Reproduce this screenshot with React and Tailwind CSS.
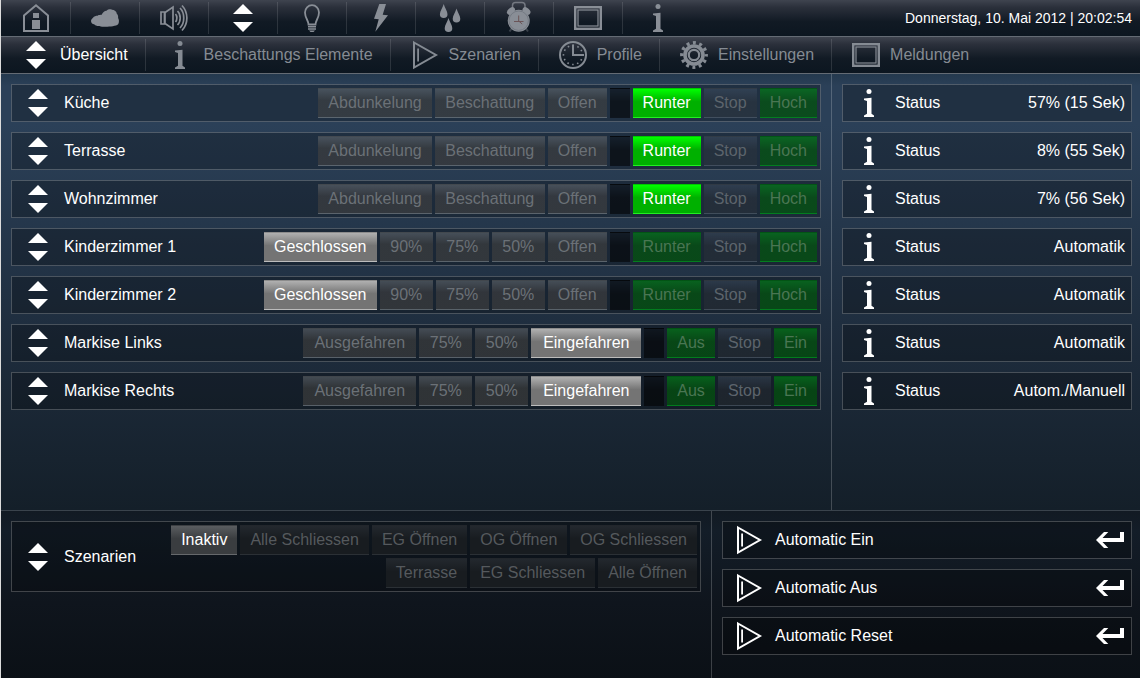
import React from 'react';

const SHAPES = {
  updown: (
    <>
      <path d="M14 0 24 10H4z" />
      <path d="M14 28 24 18H4z" />
    </>
  ),
  house: (
    <>
      <path d="M2 27V11.5L14 1.3l12 10.2V27z" fill="none" stroke="currentColor" strokeWidth="2" />
      <path d="M11 9h6v5h-6zM10 16h8v9h-8z" />
    </>
  ),
  cloud: (
    <path d="M0 17c0-1.500 1-2.500 2-3.300 1-1.500 3-2 4.500-2 1.500-1 3-.7 4.200-.9C11.500 8.500 13.500 6.800 15.500 6.800c1.500-1.500 4-1.800 5.500-1 2.500 0 4.500 1.700 4.800 3.900 1.500 1.300 1.400 3 1.300 4.300 1 1.500 1 3.500.6 5-.5 2-2.500 2.800-4.200 2.700-2 1-5 .6-7 1-3 .3-6 0-8-.8-2 .3-4-.2-5-1.400C1.500 20.200 0 19 0 17z" />
  ),
  speaker: (
    <g fill="none" stroke="currentColor" strokeWidth="1.700">
      <path d="M1 8h3.500v12H1zM5 8.500l8-5.500v22l-8-5.500z" />
      <path d="M15.500 10c1.800 2 1.800 6 0 8M17.500 7c3.600 3.500 3.600 10.500 0 14M20 4c5 5 5 15 0 20M22 1.500c6.500 7 6.500 18 0 25" />
    </g>
  ),
  bulb: (
    <>
      <path
        d="M10.500 20.500c0-4-3.500-6.500-3.500-12A7 7.300 0 0 1 21 8.500c0 5.500-3.500 8-3.500 12z"
        fill="none"
        stroke="currentColor"
        strokeWidth="1.800"
      />
      <path d="M10 22h8v1.500h-8zM10 24.300h8v1.500h-8zM11 26.500h6l-1.500 1.500h-3z" />
    </>
  ),
  bolt: <path d="M12.300 0H19l-3.300 10.700 5.300.6L8.300 27.700l3.400-12.400L7 14.700z" />,
  drops: (
    <>
      <path d="M7.700 0c.8 3.500 3.800 7 3.800 10.200a3.800 3.800 0 0 1-7.600 0C3.900 7 6.900 3.500 7.700 0z" />
      <path d="M20.500 4.500c.8 3.500 3.800 7 3.800 10.200a3.800 3.800 0 0 1-7.600 0c0-3.200 3-6.700 3.800-10.200z" />
      <path d="M12.500 14c.8 3.500 3.800 7 3.800 10.200a3.800 3.800 0 0 1-7.600 0c0-3.200 3-6.700 3.800-10.200z" />
    </>
  ),
  alarm: (
    <>
      <path d="M7.500 5V1.500c0-2 1.500-3 3-3h6.500c1.500 0 3 1 3 3V5" fill="none" stroke="currentColor" strokeWidth="1.500" opacity=".75" />
      <ellipse cx="6" cy="7" rx="4.500" ry="3" transform="rotate(-42 6 7)" />
      <ellipse cx="21.500" cy="7" rx="4.500" ry="3" transform="rotate(42 21.500 7)" />
      <path d="M7 24l-2.500 3.500M20.500 24l2.500 3.500" stroke="currentColor" strokeWidth="2" opacity=".35" />
      <circle cx="13.700" cy="16.700" r="11" />
      <circle cx="13.700" cy="16.700" r="9.700" fill="none" stroke="#747a83" strokeWidth="1" />
      <path d="M13.700 11.500v5.500l3.500 3M9 17.500h9.500" fill="none" stroke="#6b5558" strokeWidth="1" />
    </>
  ),
  screen: (
    <>
      <rect x="1.200" y="3.200" width="25.600" height="21.600" fill="none" stroke="currentColor" strokeWidth="2.400" />
      <rect x="4" y="6" width="20" height="16" fill="none" stroke="currentColor" strokeWidth="1.200" />
    </>
  ),
  info: (
    <>
      <circle cx="14" cy="2.500" r="2.500" />
      <path d="M9 9.500l7.500-.7v16l2.500 1.700V28H9v-1.500l3-1.700V12l-3-1z" />
    </>
  ),
  play: (
    <>
      <path d="M3 1.500 25 14 3 26.500z" fill="none" stroke="currentColor" strokeWidth="2" />
      <path d="M6.200 7.500h1.800v13H6.200z" />
    </>
  ),
  clock: (
    <>
      <circle cx="14" cy="14" r="13" fill="none" stroke="currentColor" strokeWidth="2" />
      <circle cx="14" cy="14" r="9.500" fill="none" stroke="currentColor" strokeWidth="1.600" strokeDasharray="1.600 3.374" strokeDashoffset=".8" />
      <path d="M14 3.500V14h11" fill="none" stroke="currentColor" strokeWidth="2" />
    </>
  ),
  gear: (
    <>
      <circle cx="14" cy="14" r="9" fill="none" stroke="currentColor" strokeWidth="3.600" />
      <circle cx="14" cy="14" r="12.200" fill="none" stroke="currentColor" strokeWidth="3.400" strokeDasharray="3 3.388" strokeDashoffset="1.500" />
      <circle cx="14" cy="14" r="5.200" fill="none" stroke="currentColor" strokeWidth="2.200" />
    </>
  ),
};

function Icon({ name }) {
  return (
    <svg viewBox="0 0 28 28" className="size-7 shrink-0 overflow-visible" fill="currentColor" aria-hidden="true">
      {SHAPES[name]}
    </svg>
  );
}

function EnterIcon() {
  return (
    <svg viewBox="0 0 28 16" className="h-4 w-7 shrink-0" fill="currentColor" aria-hidden="true">
      <path d="M0 8 8 0h4.300L6.500 6H24V0h4v10H6.500l5.800 6H8z" />
    </svg>
  );
}

const TONES = {
  off: 'border-t-[#5a626966] border-b-[#7a848c66] bg-[linear-gradient(#696e738c,#4644428c_40%)] text-[#6b7177]',
  on: 'border-t-[#8c8c8c] border-b-[#bcbcbc] bg-[linear-gradient(#b0b0b0,#747474_45%)] text-white',
  soft: 'border-t-[#3c444c80] border-b-[#6a747c50] bg-[linear-gradient(#505f7359,#3c3c3c40_45%)] text-[#5c646c]',
  gap: 'border-t-black/40 border-b-black/30 bg-[linear-gradient(#00000050,#00000090_45%)]',
  go: 'border-t-[#00c800] border-b-[#22f022] bg-[linear-gradient(#00ff00,#00b000_45%)] text-white',
  green: 'border-t-[#005a14a6] border-b-[#008c1ea6] bg-[linear-gradient(#008214a6,#005a0aa6_45%)] text-[#4a7653]',
  scene: 'border-t-[#22262b] border-b-[#2b3035] bg-[linear-gradient(#23282e,#181c20_45%)] text-[#55595d]',
  sceneOn: 'border-t-[#3c3f42] border-b-[#66696c] bg-[linear-gradient(#5a5d60,#3a3d40_45%)] text-white',
};

const WIDE = ['Abdunkelung', 'Geschlossen', 'Ausgefahren'];
const MEDIUM = ['Beschattung', 'Eingefahren'];

function keyWidth(label) {
  if (WIDE.includes(label)) return 'min-w-[113px]';
  if (MEDIUM.includes(label)) return 'min-w-[110px]';
  if (label.endsWith('%') || label === 'Stop') return 'min-w-[53px]';
  return '';
}

function Key({ label, tone }) {
  if (!label) return <span className={`h-[30px] w-5 border-y ${TONES.gap}`} />;
  return (
    <button
      type="button"
      aria-pressed={tone === 'on' || tone === 'go' || tone === 'sceneOn'}
      className={`h-[30px] border-y px-2.5 leading-[26px] whitespace-nowrap ${keyWidth(label)} ${TONES[tone]}`}
    >
      {label}
    </button>
  );
}

const BOX = 'flex border border-white/22 bg-black/25';

const shade = [['Abdunkelung', 'off'], ['Beschattung', 'off'], ['Offen', 'off'], [''], ['Runter', 'go'], ['Stop', 'soft'], ['Hoch', 'green']];
const kids = [
  ['Geschlossen', 'on'], ['90%', 'off'], ['75%', 'off'], ['50%', 'off'], ['Offen', 'off'],
  [''], ['Runter', 'green'], ['Stop', 'soft'], ['Hoch', 'green'],
];
const awning = [
  ['Ausgefahren', 'off'], ['75%', 'off'], ['50%', 'off'], ['Eingefahren', 'on'],
  [''], ['Aus', 'green'], ['Stop', 'soft'], ['Ein', 'green'],
];

const rows = [
  { name: 'Küche', keys: shade, status: '57% (15 Sek)' },
  { name: 'Terrasse', keys: shade, status: '8% (55 Sek)' },
  { name: 'Wohnzimmer', keys: shade, status: '7% (56 Sek)' },
  { name: 'Kinderzimmer 1', keys: kids, status: 'Automatik' },
  { name: 'Kinderzimmer 2', keys: kids, status: 'Automatik' },
  { name: 'Markise Links', keys: awning, status: 'Automatik' },
  { name: 'Markise Rechts', keys: awning, status: 'Autom./Manuell' },
];

const scenes = ['Inaktiv', 'Alle Schliessen', 'EG Öffnen', 'OG Öffnen', 'OG Schliessen', 'Terrasse', 'EG Schliessen', 'Alle Öffnen'];
const actions = ['Automatic Ein', 'Automatic Aus', 'Automatic Reset'];

const sections = [
  ['house', 'Haus'], ['cloud', 'Wetter'], ['speaker', 'Audio'], ['updown', 'Beschattung'], ['bulb', 'Licht'],
  ['bolt', 'Strom'], ['drops', 'Wasser'], ['alarm', 'Wecker'], ['screen', 'Bildschirm'], ['info', 'Info'],
];
const tabs = [
  ['updown', 'Übersicht'], ['info', 'Beschattungs Elemente'], ['play', 'Szenarien'],
  ['clock', 'Profile'], ['gear', 'Einstellungen'], ['screen', 'Meldungen'],
];

const BAR = 'flex h-[37px] items-center border-b border-[#646b74] bg-[linear-gradient(#3f444f,#2b303b_20%,#111a24_60%,#0c1620)] pl-px';
const SEP = 'border-r border-white/12 last:border-r-0';
const NARROW = "font-['Liberation_Sans_Narrow','Arial_Narrow','Liberation_Sans',sans-serif]";

export default function App() {
  return (
    <div className="flex min-h-screen flex-col border-l border-[#dcdcdc] bg-[#0c1118] font-['Liberation_Sans',Arial,sans-serif] text-base text-white">
      <header className={NARROW}>
        <div className={`${BAR} justify-between pr-2`}>
          <nav aria-label="Bereiche" className="flex">
            {sections.map(([icon, label]) => (
              <a
                key={icon}
                href={`#${icon}`}
                aria-label={label}
                className={`flex h-8 w-[69px] items-center justify-center ${SEP} ${icon === 'updown' ? 'text-white' : 'text-[#898e96]'}`}
              >
                <Icon name={icon} />
              </a>
            ))}
          </nav>
          <time dateTime="2012-05-10T20:02:54" className="text-sm whitespace-nowrap">
            Donnerstag, 10. Mai 2012 | 20:02:54
          </time>
        </div>
        <nav aria-label="Beschattung" className={BAR}>
          {tabs.map(([icon, label], i) => (
            <a
              key={label}
              href={`#tab-${icon}`}
              aria-current={i === 0 ? 'page' : undefined}
              className={`flex h-8 items-center gap-2.5 pr-[17px] pl-5 whitespace-nowrap ${SEP} ${i === 0 ? 'text-white' : 'text-[#858b93]'}`}
            >
              <Icon name={icon} />
              {label}
            </a>
          ))}
        </nav>
      </header>

      <main className="grid flex-1 grid-cols-[831fr_308fr] border-b border-[#3a434c] bg-[linear-gradient(#24394e,#2b4058_12px,#2b4058_50px,#1d2b3b_65%,#141f29)]">
        <section className="flex flex-col gap-2.5 border-r border-white/20 p-2.5">
          {rows.map((row) => (
            <div key={row.name} role="group" aria-label={row.name} className={`${BOX} items-center p-[3px]`}>
              <div className="flex h-[30px] flex-1 items-center gap-3 pl-[9px]">
                <Icon name="updown" />
                <span>{row.name}</span>
              </div>
              <div className="flex gap-[3px]">
                {row.keys.map(([label, tone], i) => (
                  <Key key={i} label={label} tone={tone} />
                ))}
              </div>
            </div>
          ))}
        </section>
        <section className="flex flex-col gap-2.5 py-2.5 pr-2 pl-2.5">
          {rows.map((row) => (
            <div key={row.name} className={`${BOX} h-[38px] items-center gap-3 pr-1.5 pl-3`}>
              <Icon name="info" />
              <span className="flex-1">Status</span>
              <span>{row.status}</span>
            </div>
          ))}
        </section>
      </main>

      <footer className="grid grid-cols-[711fr_428fr] bg-[linear-gradient(#121a23,#131d28_20px,#0f151d_55%,#0b1016)]">
        <section className="border-r border-white/20 p-2.5">
          <div role="group" aria-label="Szenarien" className={`${BOX} items-center gap-5 p-[3px] pl-3`}>
            <div className="flex items-center gap-3">
              <Icon name="updown" />
              <span>Szenarien</span>
            </div>
            <div className="flex flex-1 flex-wrap justify-end gap-[3px]">
              {scenes.map((label, i) => (
                <Key key={label} label={label} tone={i === 0 ? 'sceneOn' : 'scene'} />
              ))}
            </div>
          </div>
        </section>
        <section className="flex flex-col gap-2.5 pt-2.5 pr-2 pb-[23px] pl-2.5">
          {actions.map((label) => (
            <button key={label} type="button" className={`${BOX} h-[38px] items-center gap-3 pr-[7px] pl-3 text-left`}>
              <Icon name="play" />
              <span className="flex-1">{label}</span>
              <EnterIcon />
            </button>
          ))}
        </section>
      </footer>
    </div>
  );
}
